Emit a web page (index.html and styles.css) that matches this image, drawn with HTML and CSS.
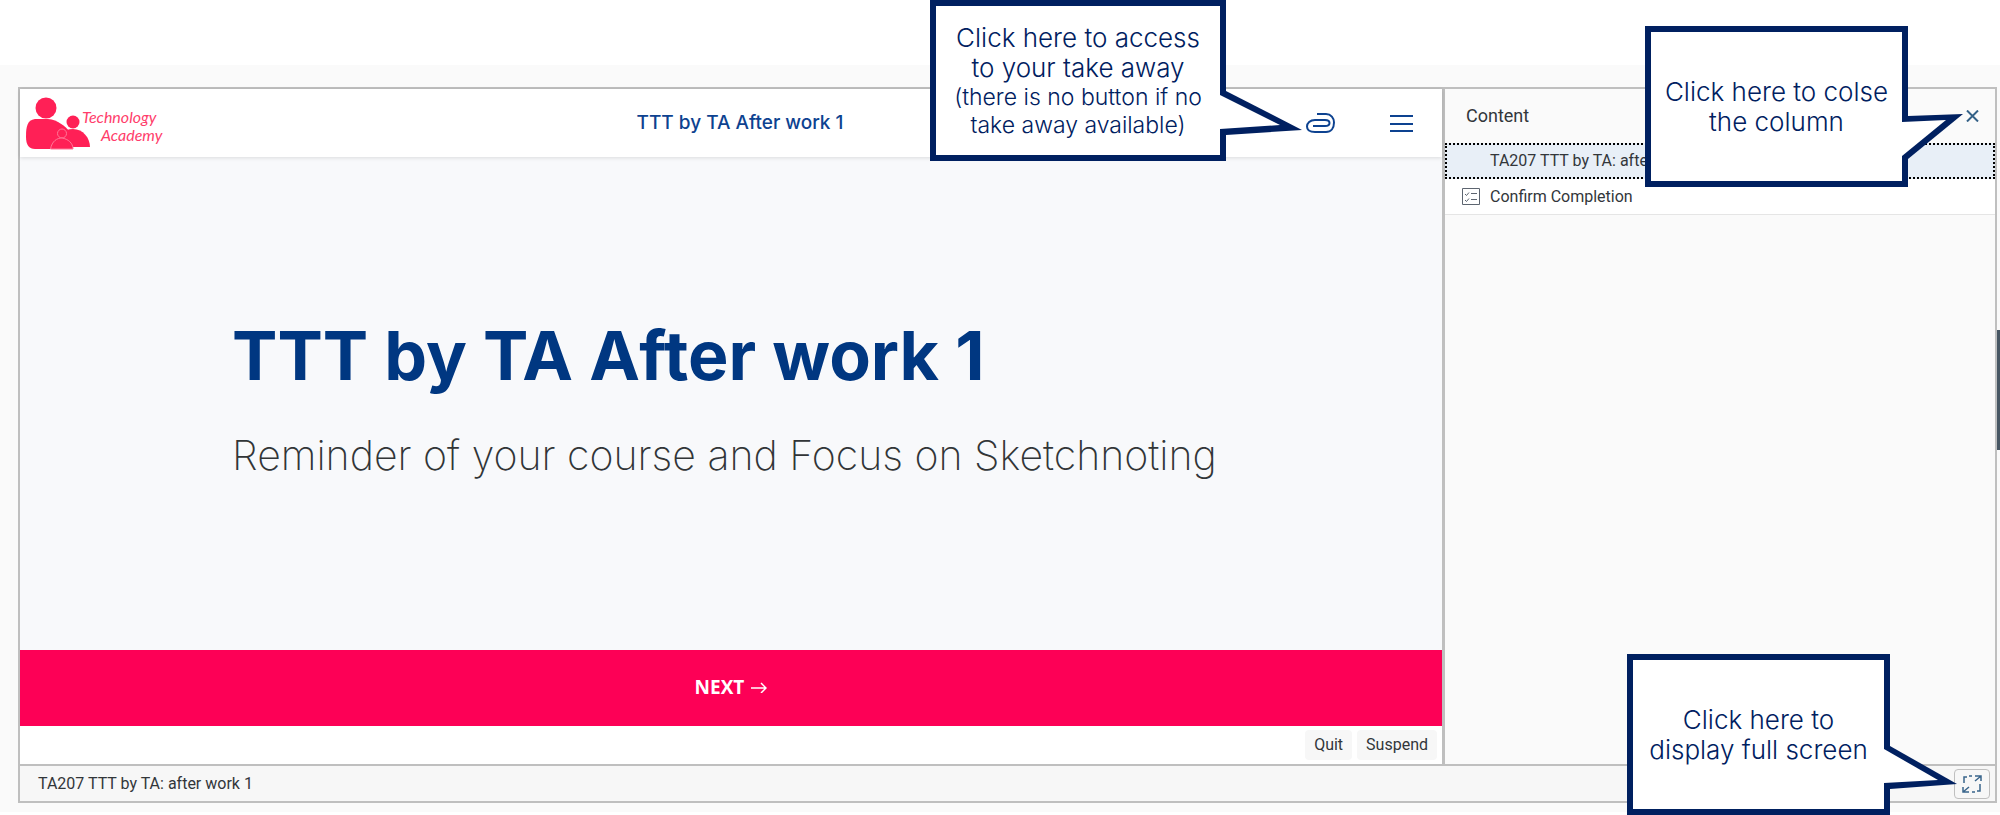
FILE: index.html
```html
<!DOCTYPE html>
<html lang="en">
<head>
<meta charset="utf-8">
<meta name="viewport" content="width=device-width, initial-scale=1">
<title>TTT by TA After work 1</title>
<link rel="stylesheet" href="styles.css">
</head>
<body>
<div class="page">
  <main class="player">
    <div class="workspace">
      <section class="course">
        <header class="course-header">
          <svg class="logo" viewBox="0 0 148 56" role="img" aria-label="Technology Academy">
            <g fill="#ff2056">
              <circle cx="20" cy="13" r="10.500"/>
              <path d="M9 24H22C32 25 39 31 44 37C47 42 47 48 47 54H9C3 54 0 50 0 42C0 32 1 25 9 24Z"/>
              <circle cx="47" cy="27" r="6.500"/>
              <path d="M34 39Q40 34 47 34C57 34 64 43 64 52H34Z"/>
              <g stroke="#ff7797"><circle cx="36" cy="38.500" r="4.500"/><path d="M24.500 54C26 46 31 43 36 43C42 44 47 48 47 54Z"/></g>
            </g>
            <text class="logo-text" x="56" y="28">Technology</text>
            <text class="logo-text" x="75" y="46">Academy</text>
          </svg>
          <h2 class="course-name">TTT by TA After work 1</h2>
          <div class="tools">
            <button class="icon-button" aria-label="Take away">
              <svg width="30" height="22" viewBox="0 0 30 22" fill="none" stroke="#0d4290" stroke-width="2"><path d="M11 2H20C25 2 28 6 28 10.500C28 16 25 20 20 20H9C4 20 1 18 1 14.500C1 11 4 8 9 8H19C25 8 25 14 19 14H7"/></svg>
            </button>
            <button class="icon-button" aria-label="Menu">
              <svg width="24" height="20" viewBox="0 0 24 20" fill="none" stroke="#0d4290" stroke-width="2"><path d="M0 3H23M0 11H23M0 18H23"/></svg>
            </button>
          </div>
        </header>
        <div class="slide">
          <h1 class="slide-title">TTT by TA After work 1</h1>
          <p class="slide-subtitle">Reminder of your course and Focus on Sketchnoting</p>
        </div>
        <button class="next">NEXT
          <svg width="16" height="12" viewBox="0 0 16 12" fill="none" stroke="#fff" stroke-width="1.500"><path d="M0 7H15M10 2L15 7L10 12"/></svg>
        </button>
        <div class="actions">
          <button class="action">Quit</button>
          <button class="action">Suspend</button>
        </div>
      </section>
      <aside class="content">
        <header class="content-header">
          <h2 class="content-title">Content</h2>
          <button class="icon-button" aria-label="Close">
            <svg width="13" height="12" viewBox="0 0 13 12" fill="none" stroke="#346187" stroke-width="2"><path d="M1 0.500L12 11.500M12 0.500L1 11.500"/></svg>
          </button>
        </header>
        <ul class="items">
          <li><a class="item item-selected" href="#course"><span class="item-icon"></span>TA207 TTT by TA: after work 1</a></li>
          <li><a class="item" href="#confirm"><span class="item-icon"><svg width="18" height="17" viewBox="0 0 18 17" fill="none" stroke="#5d6570"><path d="M.5.5H17.500V16.500H.5ZM3 6L4.500 7.500L7 4.500M3 12L4.500 13.500L7 10.500M9 5.500H15M9 11.500H15"/></svg></span>Confirm Completion</a></li>
        </ul>
      </aside>
    </div>
    <footer class="status">
      <span>TA207 TTT by TA: after work 1</span>
      <button class="fullscreen" aria-label="Full screen">
        <svg width="20" height="18" viewBox="0 0 20 18" fill="none" stroke="#3a658c" stroke-width="1.500"><path d="M2 8V2H5M7 1H10M13 1H19V6M19 1L13 6M18 9V16H15M13 17H10M7 17H1V12M1 17L7 12"/></svg>
      </button>
    </footer>
  </main>
  <div class="scroll-thumb"></div>

  <div class="callout callout-takeaway">
    <p>Click here to access<br>to your take away <small class="note">(there is no button if no<br>take away available)</small></p>
    <svg class="tail" width="84" height="60" viewBox="0 0 84 60"><path fill="#002060" d="M6 6L82 45L6 50Z"/><path fill="#fff" d="M0 10L60 40L0 44Z"/></svg>
  </div>
  <div class="callout callout-close">
    <p>Click here to colse<br>the column</p>
    <svg class="tail" width="64" height="60" viewBox="0 0 64 60"><path fill="#002060" d="M6 6L61 4L6 49Z"/><path fill="#fff" d="M0 12L44 10L0 46Z"/></svg>
  </div>
  <div class="callout callout-screen">
    <p>Click here to<br>display full screen</p>
    <svg class="tail" width="76" height="60" viewBox="0 0 76 60"><path fill="#002060" d="M6 6L73 44L6 49Z"/><path fill="#fff" d="M0 9L54 40L0 43Z"/></svg>
  </div>
</div>
</body>
</html>
```

FILE: styles.css
```css
* { box-sizing: border-box; }

body {
  margin: 0;
  background: #fff;
  color: #32363a;
  font: 16px/20px Roboto, sans-serif;
}

h1, h2, p, ul { margin: 0; padding: 0; }

button {
  border: 0;
  background: none;
  color: inherit;
  font: inherit;
  cursor: pointer;
}

.page {
  position: relative;
  display: flex;
  min-height: 100vh;
  padding: 65px 0 3px;
  overflow: hidden;
}

.player {
  flex: 1;
  display: flex;
  flex-direction: column;
  border: solid #fafafa;
  border-width: 22px 3px 9px 18px;
  background: #fafafa;
}

.workspace {
  flex: 1;
  display: flex;
  border: 2px solid #bfbfbf;
  border-bottom: 0;
}

.course {
  flex: 1;
  display: flex;
  flex-direction: column;
  background: #fff;
}

.course-header {
  display: flex;
  align-items: center;
  height: 68px;
  padding: 0 28px 0 6px;
  box-shadow: 0 1px 4px #0000001f;
  z-index: 1;
}

.logo { width: 148px; height: 56px; }

.logo-text {
  fill: #ff3d6b;
  font: italic 400 16px Lato, sans-serif;
}

.course-name {
  flex: 1;
  color: #0d4290;
  font: 500 19px/24px Inter, sans-serif;
  text-align: center;
}

.tools {
  display: flex;
  align-items: center;
  gap: 54px;
}

.icon-button { display: flex; padding: 0; }

.slide {
  flex: 1;
  display: flex;
  flex-direction: column;
  justify-content: center;
  gap: 32px;
  padding: 0 212px 10px;
  background: #f8f9fb;
}

.slide-title {
  color: #003781;
  font: 700 68px/80px Inter, sans-serif;
  white-space: nowrap;
}

.slide-subtitle {
  color: #313537;
  font: 200 41px/56px Inter, sans-serif;
  white-space: nowrap;
}

.next {
  display: flex;
  align-items: center;
  justify-content: center;
  gap: 7px;
  height: 76px;
  padding: 0 6px 2px;
  background: #fd0056;
  color: #fff;
  font: 700 19px/24px "Open Sans", sans-serif;
}

.actions {
  display: flex;
  justify-content: flex-end;
  gap: 5px;
  padding: 4px 5px;
}

.action {
  height: 30px;
  padding: 0 9px;
  border-radius: 4px;
  background: #f7f7f7;
}

.content {
  width: 28%;
  border-left: 3px solid #bfbfbf;
}

.content-header {
  display: flex;
  align-items: center;
  justify-content: space-between;
  height: 54px;
  padding: 0 16px 0 21px;
}

.content-title { font: 400 18px/24px Roboto, sans-serif; }

.items { list-style: none; }

.item {
  display: flex;
  align-items: center;
  height: 36px;
  padding-left: 17px;
  border-bottom: 1px solid #e5e5e5;
  background: #fff;
  color: inherit;
  text-decoration: none;
}

.item-selected {
  border: 2px dotted #000;
  padding-left: 15px;
  background: #e8eff7;
}

.item-icon { display: flex; width: 28px; }

.status {
  display: flex;
  align-items: center;
  justify-content: space-between;
  height: 39px;
  padding: 0 5px 0 18px;
  border: 2px solid #bfbfbf;
  background: #f7f7f7;
}

.fullscreen {
  display: flex;
  align-items: center;
  justify-content: center;
  width: 36px;
  height: 30px;
  padding: 0;
  border: 1px solid #bfbfbf;
  border-radius: 4px;
}

.scroll-thumb {
  position: absolute;
  top: 330px;
  right: 0;
  width: 3px;
  height: 120px;
  background: #475663;
}

.callout {
  position: absolute;
  z-index: 2;
  display: flex;
  align-items: center;
  justify-content: center;
  width: 263px;
  height: 161px;
  border: 6px solid #002060;
  background: #fff;
  color: #002060;
  font: 300 26px/30px "Century Gothic", "URW Gothic", Inter, sans-serif;
  text-align: center;
  white-space: nowrap;
}

.note {
  display: block;
  font-size: 23px;
  line-height: 28px;
}

.tail { position: absolute; left: 100%; }

.callout-takeaway { top: 0; right: 774px; width: 296px; }
.callout-takeaway .tail { top: 79px; }
.callout-close { top: 26px; right: 92px; }
.callout-close .tail { top: 78px; }
.callout-screen { bottom: 0; right: 110px; }
.callout-screen .tail { top: 80px; }
```
